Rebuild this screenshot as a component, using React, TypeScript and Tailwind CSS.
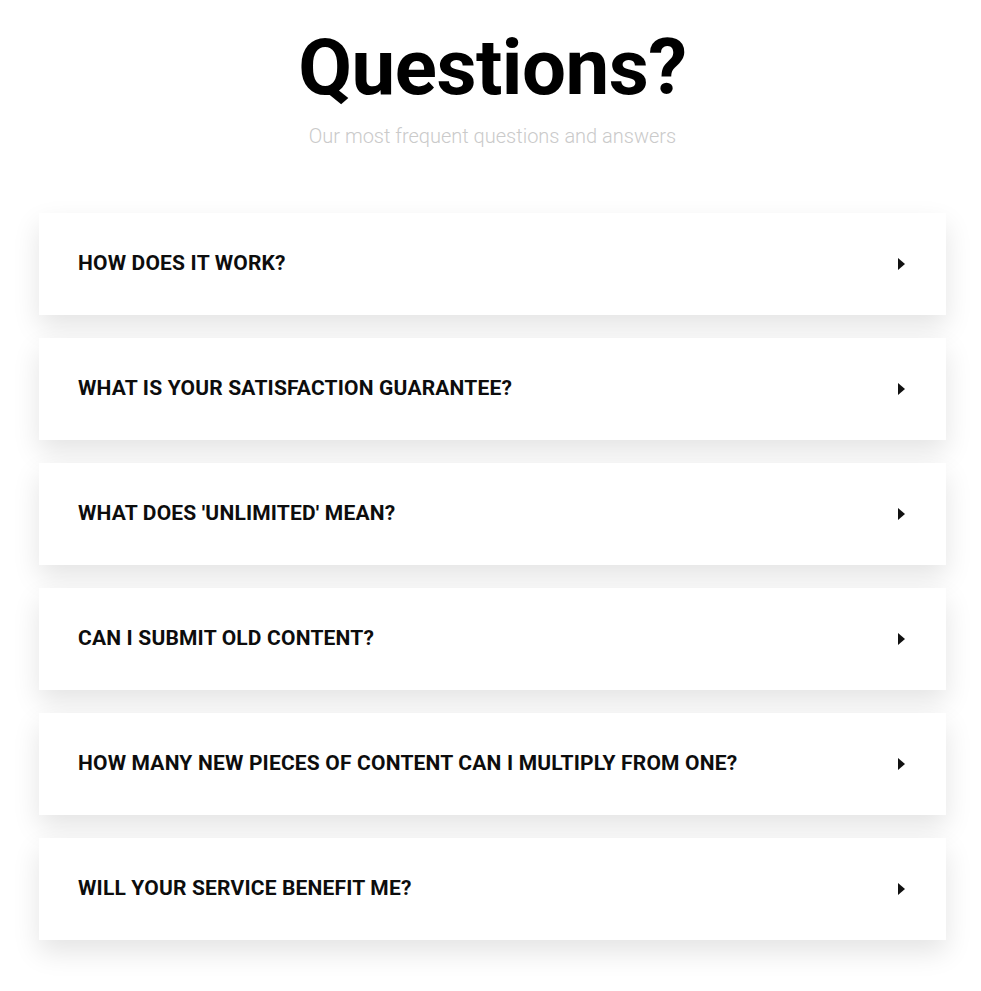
const questions = [
  "How does it work?",
  "What is your satisfaction guarantee?",
  "What does 'unlimited' mean?",
  "Can I submit old content?",
  "How many new pieces of content can I multiply from one?",
  "Will your service benefit me?",
];

function Caret() {
  return (
    <svg width="7" height="12" viewBox="0 0 7 12" aria-hidden="true">
      <path d="M0 0 L7 6 L0 12 Z" fill="#111" />
    </svg>
  );
}

export default function App() {
  return (
    <main className="min-h-screen bg-white font-['Roboto',sans-serif] text-black">
      <section className="mx-auto flex w-full flex-col items-center pl-[39px] pr-[35px] pt-[22px]">
        <h1 className="text-[78px] font-bold leading-[92px] tracking-[-0.5px]">Questions?</h1>
        <p className="mt-[10px] text-[20px] font-light leading-[24px] text-[#cacaca]">
          Our most frequent questions and answers
        </p>

        <div className="mt-[65px] flex w-full flex-col gap-[23px]">
          {questions.map((q) => (
            <button
              key={q}
              type="button"
              className="flex h-[102px] w-full items-center justify-between bg-white pl-[39px] pr-[41px] text-left shadow-[0_12px_26px_rgba(0,0,0,0.11)]"
            >
              <span className="text-[21px] font-bold uppercase tracking-[0.18px] text-[#0d0d0d]">{q}</span>
              <Caret />
            </button>
          ))}
        </div>
      </section>
    </main>
  );
}
